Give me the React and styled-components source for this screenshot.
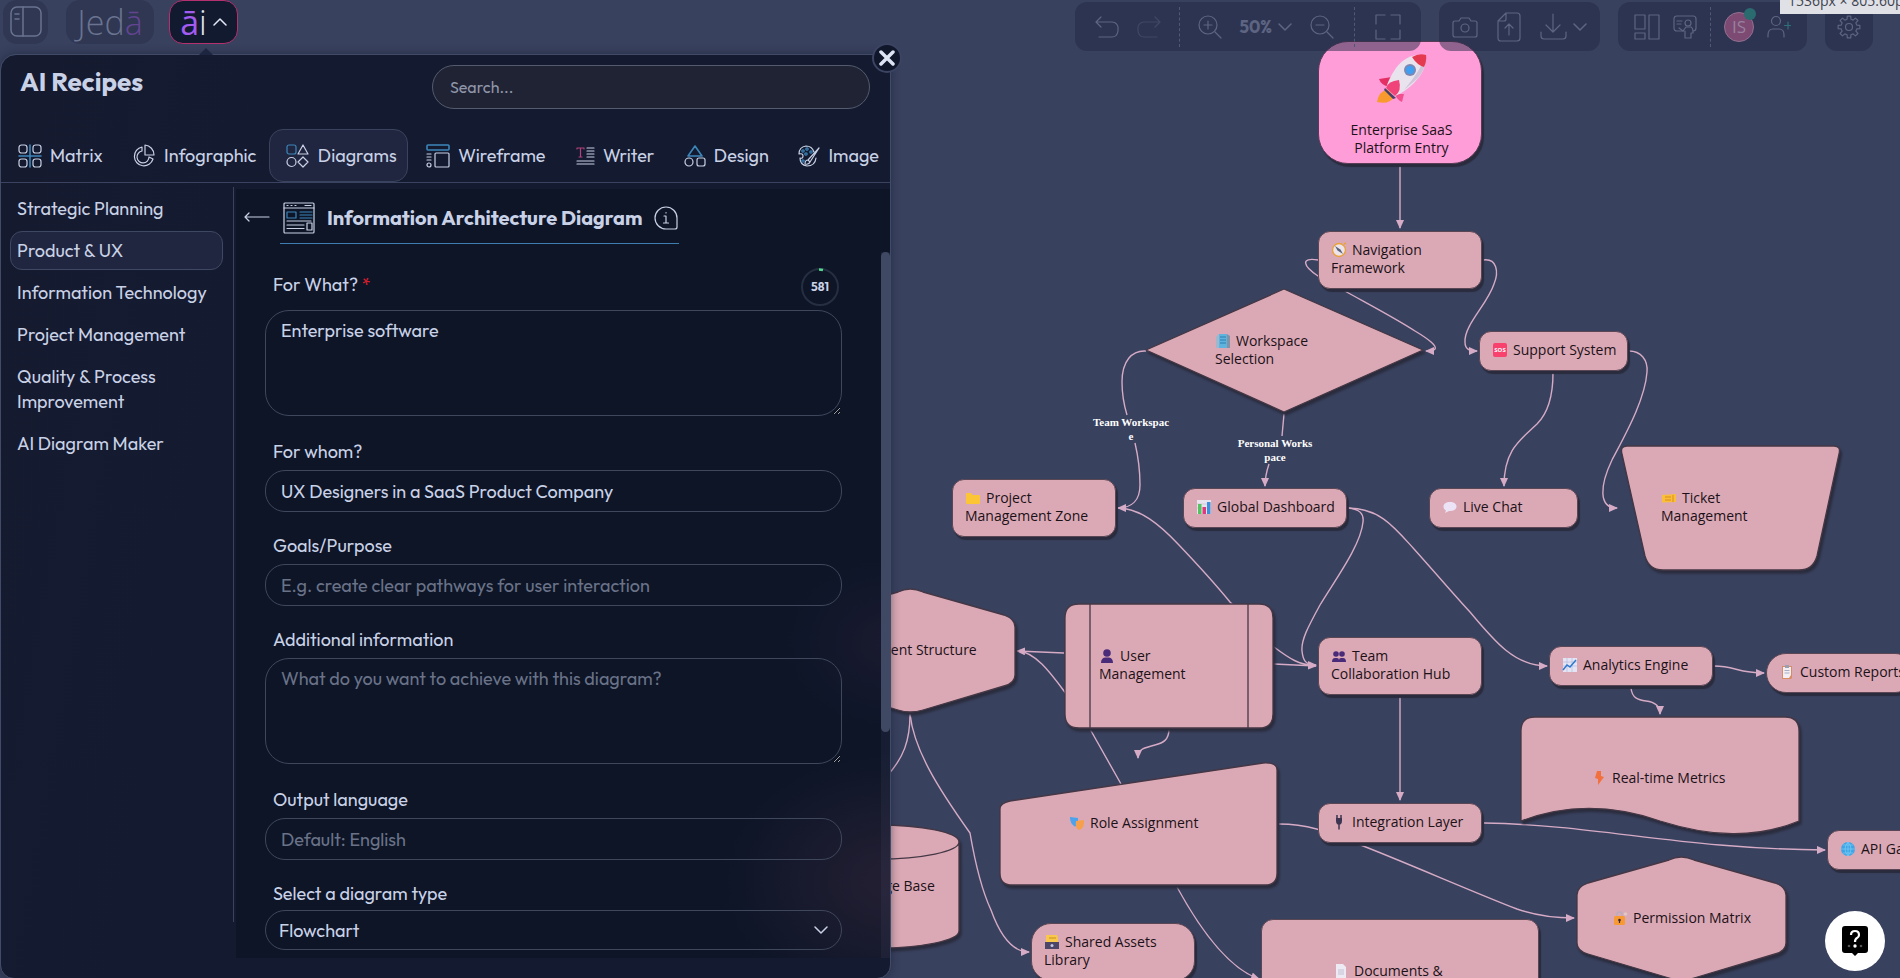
import React from "react";
import styled, { createGlobalStyle, css } from "styled-components";

const GlobalStyle = createGlobalStyle`
  *, *::before, *::after {
    box-sizing: border-box;
  }
  body {
    margin: 0;
    background: #38415e;
    color: #c9d1e6;
    font-family: Outfit, Lato, "Open Sans", sans-serif;
    font-size: 18px;
  }
  button, input, textarea, select {
    font: inherit;
    color: inherit;
  }
`;

const Page = styled.div`
  position: relative;
  min-height: 100vh;
  display: flex;
  flex-direction: column;
  overflow: hidden;
`;

/* ---------- canvas ---------- */

const Canvas = styled.main`
  position: absolute;
  inset: 0;
  overflow: hidden;
  font-family: "Open Sans", "Noto Sans", sans-serif;
  font-size: 14px;
  line-height: 18px;
  color: #1c1118;
`;
const Edges = styled.svg`
  position: absolute;
  inset: 0;
  width: 100%;
  height: 100%;
  fill: none;
  stroke: #d6abc6;
  stroke-width: 1.4;
`;
const Node = styled.div`
  position: absolute;
  left: ${(p) => p.$x}px;
  top: ${(p) => p.$y}px;
  width: ${(p) => p.$w}px;
  height: ${(p) => p.$h}px;
  padding-bottom: 2px;
  padding-left: ${(p) => p.$pad}px;
  display: flex;
  align-items: center;
  ${(p) =>
    p.$plain &&
    css`
      background: #dba9b5;
      border-radius: ${p.$radius}px;
      border: 1px solid #5b4655;
      box-shadow: 2px 3px 1px #2a2c3d;
    `}
`;
const EntryNode = styled(Node)`
  flex-direction: column;
  padding: 12px 0 0 3px;
  gap: 17px;
  text-align: center;
  background: #ff9dd9;
  border: 1px solid #5b3c57;
  border-radius: 30px;
  box-shadow: 2px 3px 1px #2a2c3d;
`;
const Outline = styled.svg`
  position: absolute;
  inset: 0;
  width: 100%;
  height: 100%;
  overflow: visible;
  fill: #dba9b5;
  stroke: #453745;
  stroke-width: 1.3;
  filter: drop-shadow(2px 3px 1px #2a2c3d);
`;
const NodeText = styled.span`
  position: relative;
  white-space: pre-line;
`;
const Emoji = styled.svg`
  width: 16px;
  height: 16px;
  margin-right: 5px;
  vertical-align: -3px;
`;
const EdgeLabel = styled.div`
  position: absolute;
  left: ${(p) => p.$x}px;
  top: ${(p) => p.$y}px;
  transform: translateX(-50%);
  white-space: pre;
  text-align: center;
  color: #fff;
  font: bold 11px/14px "Liberation Serif", serif;
`;

const emojis = {
  compass: (
    <>
      <circle cx="8" cy="8" r="6.500" fill="#ece4ea" stroke="#e8a13c" strokeWidth="1.4" />
      <path d="M4 4l5.5 3.5L12 12 6.5 8.5z" fill="#5c6079" />
      <path d="M13 2l2-1" stroke="#e8a13c" strokeWidth="1.5" />
    </>
  ),
  building: (
    <>
      <path d="M1 4l3-3v14H1z" fill="#9db8cc" />
      <path d="M4 1h8v14H4z" fill="#5eb4de" />
      <path d="M12 1l3 2v12h-3z" fill="#8293a6" />
      <path d="M6 3v9M8 3v9M10 3v9" stroke="#2f7fb0" strokeDasharray="2 1" />
    </>
  ),
  sos: (
    <>
      <rect x="1" y="1" width="14" height="14" rx="2" fill="#f8416d" />
      <text x="8" y="10" textAnchor="middle" fontSize="6" fontWeight="700" fill="#fff">SOS</text>
    </>
  ),
  folder: <path d="M1 4q0-1 1-1h4l1.500 2H14q1 0 1 1v7q0 1-1 1H2q-1 0-1-1z" fill="#fcc536" />,
  bars: (
    <>
      <rect x="1" y="1" width="14" height="14" fill="#e8e4ee" />
      <path d="M1 5h14M1 9h14" stroke="#c9b7d1" strokeWidth=".6" />
      <path d="M2 5h3.500v10H2z" fill="#56c162" />
      <path d="M6.500 8H10v7H6.500z" fill="#df3a7c" />
      <path d="M11 3h3.500v12H11z" fill="#3c8fdb" />
    </>
  ),
  chat: <path d="M8 3c4 0 6.500 2 6.500 4.500S12 12 8 12l-1 0L3 14l1-2.500C2 10.500 1.500 9 1.500 7.500 1.500 5 4 3 8 3z" fill="#ece4f6" />,
  ticket: (
    <>
      <path d="M1 5l14-1v8L1 12.500z" fill="#fbbe3a" />
      <path d="M4 7h6M4 10h6M12 5v7" stroke="#d98d1e" />
    </>
  ),
  user: (
    <>
      <circle cx="8" cy="5" r="3.800" fill="#4a2b7a" />
      <path d="M2 15q0-5 4-5.500h4q4 .5 4 5.500z" fill="#4a2b7a" />
    </>
  ),
  users: (
    <>
      <circle cx="5" cy="6" r="2.800" fill="#4a2b7a" />
      <circle cx="11" cy="6" r="2.800" fill="#4a2b7a" />
      <path d="M1 14q0-4 3-4h2q2 0 2 2 0-2 2-2h2q3 0 3 4z" fill="#4a2b7a" />
    </>
  ),
  chart: (
    <>
      <rect x="1" y="1" width="14" height="14" fill="#e3e4f4" />
      <path d="M1 5h14M1 9h14M5 1v14M10 1v14" stroke="#b6bddd" strokeWidth=".7" />
      <path d="M1 13l4-5 3 2 6-7" stroke="#2f79cf" strokeWidth="1.500" fill="none" />
    </>
  ),
  clipboard: (
    <>
      <path d="M3 2h10v12l-1 1H3z" fill="#d98c62" />
      <path d="M4 3h8v8l-2 3H4z" fill="#f1eef6" />
      <path d="M6 1h4v3H6z" fill="#9aa0b4" />
      <path d="M5.500 6.500h5M5.500 9h5" stroke="#a9adc0" />
    </>
  ),
  bolt: <path d="M6 1h4v5l3 1-6 8V9L4 8z" fill="#f2703e" />,
  masks: (
    <>
      <path d="M1 2l8 1v5c-1 3-3 4-4 3S1 8 1 2z" fill="#4aa3ec" />
      <path d="M7 6l8-1c0 6-1 9-5 10-2-1-4-3-3-9z" fill="#f6a04b" />
    </>
  ),
  plug: (
    <>
      <path d="M6 1v4M10 1v4" stroke="#3d3552" strokeWidth="1.500" />
      <path d="M5 4h6v3q0 3-1.500 3.500h-3Q5 10 5 7z" fill="#3d3552" />
      <path d="M8 10v5.500" stroke="#3d3552" strokeWidth="1.500" />
    </>
  ),
  globe: (
    <>
      <circle cx="8" cy="8" r="7" fill="#3ea6e6" />
      <path d="M1 8h14M3 4h10M3 12h10M8 1v14M8 1q-6 7 0 14M8 1q6 7 0 14" stroke="#7fcaf3" strokeWidth=".7" fill="none" />
    </>
  ),
  lock: (
    <>
      <path d="M5 7V4.500a2.500 2.500 0 015 0V7" stroke="#b9adbd" strokeWidth="1.500" fill="none" />
      <rect x="2" y="6" width="11" height="9" rx="1.500" fill="#f79a33" />
      <circle cx="7.500" cy="10" r="1.300" fill="#3d2433" />
      <path d="M7.500 10v3" stroke="#3d2433" strokeWidth="1.200" />
      <circle cx="13.500" cy="4" r="1.800" fill="#e0c7c4" />
    </>
  ),
  box: (
    <>
      <path d="M2 1h11l1 3v4H2z" fill="#f9c74c" />
      <path d="M5 4h7" stroke="#c98f24" />
      <path d="M1 8h14v7H1z" fill="#4d4668" />
      <circle cx="8" cy="11.500" r="1.500" fill="#c6c4e6" />
    </>
  ),
  page: (
    <>
      <path d="M3 1h7l3 3v11H3z" fill="#eeeaf4" />
      <path d="M5 7h6M5 9h6M5 11h6" stroke="#b7b6cb" strokeWidth=".8" />
    </>
  ),
};

const shapes = {
  diamond: "M138 0L277 61L138 123L0 61Z",
  trapezoid: "M6 0H213Q220 0 218 8L196 110Q192 124 178 124H42Q28 124 24 110L1 8Q-1 0 6 0Z",
  hexagon:
    "M92 3Q104-3 117 3L198 26Q209 30 209 38V86Q209 94 198 97L117 121Q104 125 92 121L11 97Q0 94 0 86V38Q0 30 11 26Z",
  input: "M10 39L263 1Q277 0 277 8V111Q277 123 265 123H12Q0 123 0 111V47Q0 41 10 39Z",
  document: "M14 0H264Q278 0 278 14V104C235 122 190 120 139 104C90 87 45 87 0 104V14Q0 0 14 0Z",
  subroutine: "M14 0H194Q208 0 208 14V110Q208 124 194 124H14Q0 124 0 110V14Q0 0 14 0ZM25 0V124M183 0V124",
  cylinder: "M0 17A82 17 0 01164 17V106A82 17 0 010 106ZM164 17A82 17 0 010 17",
};

const nodes = [
  { x: 1318, y: 231, w: 164, h: 58, icon: "compass", text: "Navigation\nFramework" },
  { x: 1146, y: 289, w: 277, h: 123, pad: 69, shape: "diamond", icon: "building", text: "Workspace\nSelection" },
  { x: 1479, y: 331, w: 149, h: 40, icon: "sos", text: "Support System" },
  { x: 952, y: 479, w: 164, h: 58, icon: "folder", text: "Project\nManagement Zone" },
  { x: 1183, y: 488, w: 164, h: 40, icon: "bars", text: "Global Dashboard" },
  { x: 1429, y: 488, w: 149, h: 40, icon: "chat", text: "Live Chat" },
  { x: 1621, y: 446, w: 219, h: 124, pad: 40, shape: "trapezoid", icon: "ticket", text: "Ticket\nManagement" },
  { x: 806, y: 589, w: 209, h: 123, pad: 33, shape: "hexagon", icon: "folder", text: "Content Structure" },
  { x: 1065, y: 604, w: 208, h: 124, pad: 34, shape: "subroutine", icon: "user", text: "User\nManagement" },
  { x: 1318, y: 637, w: 164, h: 58, icon: "users", text: "Team\nCollaboration Hub" },
  { x: 1549, y: 646, w: 164, h: 40, icon: "chart", text: "Analytics Engine" },
  { x: 1766, y: 653, w: 149, h: 40, radius: 20, icon: "clipboard", text: "Custom Reports" },
  { x: 1521, y: 717, w: 278, h: 123, pad: 70, shape: "document", icon: "bolt", text: "Real-time Metrics" },
  { x: 1000, y: 762, w: 277, h: 123, pad: 69, shape: "input", icon: "masks", text: "Role Assignment" },
  { x: 1318, y: 803, w: 164, h: 40, icon: "plug", text: "Integration Layer" },
  { x: 1827, y: 830, w: 149, h: 40, icon: "globe", text: "API Gateway" },
  { x: 1577, y: 857, w: 209, h: 123, pad: 35, shape: "hexagon", icon: "lock", text: "Permission Matrix" },
  { x: 795, y: 825, w: 164, h: 123, shape: "cylinder", icon: "page", text: "Knowledge Base" },
  { x: 1031, y: 923, w: 164, h: 58, radius: 20, icon: "box", text: "Shared Assets\nLibrary" },
  { x: 1261, y: 919, w: 278, h: 124, pad: 71, icon: "page", text: "Documents &\nFiles" },
];

const edges = [
  "M1400 166V228",
  "M1318 260C1300 257 1303 266 1318 276C1330 283 1335 286 1343 290C1370 305 1395 318 1415 331C1430 340 1437 346 1435 349C1434 351 1431 351 1426 351",
  "M1483 260C1497 258 1499 272 1494 284C1487 305 1464 325 1465 342C1465 349 1469 351 1477 351",
  "M1135 443C1139 460 1140 470 1140 485C1140 500 1132 508 1118 508",
  "M1269 464C1267 470 1265 476 1265 486",
  "M1348 508C1380 508 1395 528 1414 549C1440 578 1455 596 1470 612C1495 642 1515 666 1547 666",
  "M1348 508C1360 509 1364 514 1363 522C1361 545 1335 580 1320 605C1308 627 1301 640 1302 651C1303 660 1305 665 1316 665",
  "M1274 664L1316 666",
  "M1064 653L1017 651",
  "M1169 729C1169 740 1163 743 1155 745C1145 748 1138 748 1138 758",
  "M1400 696V800",
  "M910 714C914 750 938 788 970 833C976 868 984 895 991 910C1000 935 1012 952 1029 952",
  "M1279 824C1310 824 1330 833 1358 844C1400 860 1480 895 1517 909C1540 917 1560 918 1574 918",
  "M1484 823C1600 825 1680 849 1825 850",
  "M1631 688C1632 698 1638 700 1646 701C1655 702 1660 706 1660 714",
  "M1714 666C1735 666 1738 673 1764 673",
  "M1553 373C1553 395 1549 412 1537 424C1520 440 1504 450 1504 486",
  "M1629 351C1641 351 1648 360 1647 372C1645 400 1625 435 1612 460C1600 485 1598 508 1617 508",
  "M1177 887C1195 920 1225 967 1259 979",
];
const plainEdges = [
  "M1146 351C1132 350 1122 361 1122 382C1122 395 1124 405 1127 415",
  "M1284 414L1282 436",
  "M1118 508C1140 508 1160 525 1178 544C1198 565 1212 580 1230 602L1274 647C1290 659 1300 665 1312 665",
  "M1018 651C1035 652 1050 672 1064 691C1075 705 1085 720 1090 729L1121 784",
  "M910 714C910 740 904 758 886 777",
];

function Rocket() {
  return (
    <svg width="50" height="50" viewBox="0 0 50 50" aria-hidden="true">
      <path d="M11 35Q1 38 0 48Q12 51 17 43Z" fill="#f99a2e" />
      <path d="M15 23L2 25Q4 31 12 33Z" fill="#e42f64" />
      <path d="M27 40L25 48Q20 46 18 40Z" fill="#f24f8f" />
      <path d="M8 34L19 44L16 45L7 36Z" fill="#46406e" />
      <path d="M49 1Q30-1 19 14Q12 24 9 34L18 42Q28 38 37 29Q50 16 49 1Z" fill="#e9e3ee" />
      <path d="M49 1Q50 13 41 24L27 36Q44 16 49 1Z" fill="#cfc4da" />
      <path d="M49 1Q42-1 35 3Q40 11 47 13Q50 7 49 1Z" fill="#e53950" />
      <circle cx="33" cy="16" r="6" fill="#7b88b4" />
      <circle cx="33" cy="16" r="4" fill="#3f9ef0" />
      <path d="M22 26Q11 27 9 34L18 42Q25 37 22 26Z" fill="#f0437a" />
    </svg>
  );
}

function FlowNode({ x, y, w, h, pad = 12, radius = 12, shape, icon, text }) {
  return (
    <Node $x={x} $y={y} $w={w} $h={h} $pad={pad} $radius={radius} $plain={!shape}>
      {shape && (
        <Outline>
          <path d={shapes[shape]} strokeLinejoin="round" />
        </Outline>
      )}
      <NodeText>
        <Emoji viewBox="0 0 16 16" aria-hidden="true">
          {emojis[icon]}
        </Emoji>
        {text}
      </NodeText>
    </Node>
  );
}

function Flowchart() {
  return (
    <Canvas>
      <Edges aria-hidden="true">
        <defs>
          <marker id="arrow" viewBox="0 0 9 8" refX="8" refY="4" markerWidth="9" markerHeight="8" markerUnits="userSpaceOnUse" orient="auto">
            <path d="M0 0L9 4L0 8Z" fill="#d6abc6" stroke="none" />
          </marker>
        </defs>
        {plainEdges.map((d) => (
          <path key={d} d={d} />
        ))}
        {edges.map((d) => (
          <path key={d} d={d} markerEnd="url(#arrow)" />
        ))}
      </Edges>
      <EntryNode $x={1318} $y={41} $w={164} $h={123}>
        <Rocket />
        <NodeText>{"Enterprise SaaS\nPlatform Entry"}</NodeText>
      </EntryNode>
      {nodes.map((node) => (
        <FlowNode key={node.text} {...node} />
      ))}
      <EdgeLabel $x={1131} $y={415}>{"Team Workspac\ne"}</EdgeLabel>
      <EdgeLabel $x={1275} $y={436}>{"Personal Works\npace"}</EdgeLabel>
    </Canvas>
  );
}

/* ---------- top bar ---------- */

const TopBar = styled.header`
  position: relative;
  display: flex;
  justify-content: space-between;
  padding: 0 27px 0 3px;
`;
const BarSide = styled.div`
  display: flex;
  gap: ${(p) => p.$gap}px;
  padding-top: ${(p) => p.$top || 0}px;
`;
const IconButton = styled.button`
  flex: none;
  display: flex;
  align-items: center;
  justify-content: center;
  gap: 6px;
  padding: 0;
  border: 0;
  background: none;
  cursor: pointer;

  &:disabled {
    color: inherit;
    opacity: 0.4;
  }
`;
const BarButton = styled(IconButton)`
  height: 44px;
  width: ${(p) => p.$w}px;
  border-radius: 14px;
  background: rgba(34, 39, 68, 0.4);
  color: #6a7390;
`;
const AiButton = styled(BarButton)`
  margin-left: -3px;
  border: 1px solid #b5306e;
  background: #121a30;
  color: #e3e8f6;
`;
const Logo = styled.span`
  font: 300 34px/42px "Open Sans", sans-serif;
  color: ${(p) => (p.$dim ? "#6a7390" : "#e3e8f6")};

  b {
    font-weight: ${(p) => (p.$dim ? 300 : 400)};
    color: ${(p) => (p.$dim ? "#634492" : "#a35cf0")};
  }
`;
const ToolGroup = styled.div`
  display: flex;
  align-items: center;
  height: 49px;
  padding: 0 ${(p) => p.$px}px;
  gap: ${(p) => p.$gap}px;
  border-radius: 12px;
  background: rgba(34, 39, 68, 0.5);
  color: #5d6582;
`;
const Divider = styled.span`
  height: 40px;
  margin: 0 ${(p) => p.$mx || 0}px;
  border-left: 1px dashed #505873;
`;
const ZoomLevel = styled(IconButton)`
  font-size: 17px;
  font-weight: 700;
`;
const Avatar = styled.span`
  position: relative;
  width: 30px;
  height: 30px;
  border: 1px solid #93708f;
  border-radius: 50%;
  background: #7c4a73;
  color: #98809f;
  font: 17px/28px "Open Sans", sans-serif;
  text-align: center;
`;
const Presence = styled.span`
  position: absolute;
  top: -5px;
  right: -3px;
  width: 12px;
  height: 12px;
  border-radius: 50%;
  background: #2a6b70;
`;
const SizeHint = styled.div`
  position: absolute;
  top: -9px;
  left: calc(100% - 120px);
  height: 23px;
  padding: 0 8px;
  background: #dfe1e7;
  color: #40444f;
  font: 14px/20px "Open Sans", sans-serif;
  white-space: nowrap;
`;

function Icon({ size = 24, w, children, sw = 1.2 }) {
  return (
    <svg
      width={w || size}
      height={size}
      viewBox={`0 0 ${w || size} ${size}`}
      fill="none"
      stroke="currentColor"
      strokeWidth={sw}
      strokeLinecap="round"
      strokeLinejoin="round"
      aria-hidden="true"
    >
      {children}
    </svg>
  );
}

function Chevron({ up }) {
  return (
    <Icon size={14} sw={1.5}>
      <path d={up ? "M1 10l6-6 6 6" : "M1 4l6 6 6-6"} />
    </Icon>
  );
}

const gearTeeth = Array.from({ length: 8 }, (_, i) => {
  const at = (r, deg) => {
    const a = ((i * 45 + deg) * Math.PI) / 180;
    return `${12 + r * Math.cos(a)} ${12 + r * Math.sin(a)}`;
  };
  return `${i ? "L" : "M"}${at(8, -14)}L${at(11, -9)}L${at(11, 9)}L${at(8, 14)}`;
}).join("");

function Toolbar() {
  return (
    <BarSide $gap={18} $top={2}>
      <ToolGroup $px={20} $gap={18}>
        <IconButton aria-label="Undo">
          <Icon><path d="M6 2L1 7l5 5M1 7h16a6 6 0 016 7v2q-1 6-6 6H4" /></Icon>
        </IconButton>
        <IconButton aria-label="Redo" disabled>
          <Icon><path d="M18 2l5 5-5 5M23 7H7a6 6 0 00-6 7v2q1 6 6 6h13" /></Icon>
        </IconButton>
        <Divider />
        <IconButton aria-label="Zoom in">
          <Icon><circle cx="10" cy="10" r="9" /><path d="M17 17l6 6M10 6v8M6 10h8" /></Icon>
        </IconButton>
        <ZoomLevel aria-label="Zoom level">50%<Chevron /></ZoomLevel>
        <IconButton aria-label="Zoom out">
          <Icon><circle cx="10" cy="10" r="9" /><path d="M17 17l6 6M6 10h8" /></Icon>
        </IconButton>
        <Divider $mx={2} />
        <IconButton aria-label="Full screen">
          <Icon size={26}><path d="M1 10V1h9M16 1h9v9M25 16v9h-9M10 25H1v-9" /></Icon>
        </IconButton>
      </ToolGroup>
      <ToolGroup $px={13} $gap={19}>
        <IconButton aria-label="Snapshot">
          <Icon size={26}>
            <path d="M3 7h4l2-3h8l2 3h4q2 0 2 2v12q0 2-2 2H3q-2 0-2-2V9q0-2 2-2z" />
            <circle cx="13" cy="14" r="4" />
          </Icon>
        </IconButton>
        <IconButton aria-label="Import">
          <Icon size={30} w={24}>
            <path d="M9 1h11q3 0 3 3v22q0 3-3 3H4q-3 0-3-3V9zM9 1v6q0 2-2 2H1M12 23V12M8 16l4-4 4 4" />
          </Icon>
        </IconButton>
        <IconButton aria-label="Export">
          <Icon size={27}><path d="M13 1v17M6 12l7 7 7-7M1 19v4q0 3 3 3h19q3 0 3-3v-4" /></Icon>
          <Chevron />
        </IconButton>
      </ToolGroup>
      <ToolGroup $px={16} $gap={13}>
        <IconButton aria-label="Templates">
          <Icon size={26}><path d="M1 1h10v14H1zM1 19h10v6H1zM15 1h10v24H15z" /></Icon>
        </IconButton>
        <IconButton aria-label="Present">
          <Icon size={24}>
            <path d="M11 16H4q-3 0-3-3V4q0-3 3-3h16q3 0 3 3v9q0 3-3 3M4 6h5M4 9h4" />
            <circle cx="15" cy="8" r="3" />
            <path d="M6 13l4 3 3-4h5q2 1 2 4v2h-2v5h-6v-7" />
          </Icon>
        </IconButton>
        <Divider />
        <Avatar>IS<Presence /></Avatar>
        <IconButton aria-label="Invite">
          <Icon size={24}>
            <circle cx="9" cy="6" r="4.500" />
            <path d="M1 22v-2q0-6 5-6h6q5 0 5 6v2" />
            <path d="M21 7v7M17.500 10.500h6" stroke="#2f7078" />
          </Icon>
        </IconButton>
      </ToolGroup>
      <ToolGroup $px={12}>
        <IconButton aria-label="Settings">
          <Icon><path d={`${gearTeeth}Z`} /><circle cx="12" cy="12" r="3.500" /></Icon>
        </IconButton>
      </ToolGroup>
    </BarSide>
  );
}

/* ---------- recipes panel ---------- */

const Panel = styled.section`
  position: relative;
  flex: 1;
  display: flex;
  flex-direction: column;
  width: 100%;
  max-width: 891px;
  margin-top: 3px;
  border: 1px solid #414a66;
  border-radius: 16px 0 14px 14px;
  background: linear-gradient(100deg, #151a2f, #141b30 30%);
  box-shadow: 0 0 8px rgba(20, 27, 48, 0.5);
`;
const Caret = styled.span`
  position: absolute;
  top: -7px;
  left: 198px;
  border: 7px solid transparent;
  border-top: 0;
  border-bottom-color: #1d2540;
`;
const CloseButton = styled(IconButton)`
  position: absolute;
  top: -12px;
  right: -12px;
  width: 30px;
  height: 30px;
  border: 2px solid #3b4462;
  border-radius: 50%;
  background: #10172b;
  color: #dde4f4;
`;
const PanelHead = styled.div`
  display: flex;
  justify-content: space-between;
  padding: 10px 20px 20px 19px;
`;
const Title = styled.h1`
  margin: 0;
  font-size: 26px;
  line-height: 34px;
  font-weight: 700;
`;
const Search = styled.input`
  width: 52%;
  max-width: 438px;
  height: 44px;
  padding: 0 17px;
  border: 1px solid #555b6e;
  border-radius: 22px;
  background: #202334;
  font-size: 16px;
  outline: none;

  &::placeholder {
    color: #9096a9;
  }
`;
const Tabs = styled.nav`
  display: flex;
  justify-content: space-between;
  border-bottom: 1px solid #3a4460;
`;
const Tab = styled.button`
  display: flex;
  align-items: center;
  gap: 8px;
  height: 53px;
  padding: 0 10px 0 16px;
  border: 1px solid ${(p) => (p.$active ? "#3a435d" : "transparent")};
  border-radius: 14px;
  background: ${(p) => (p.$active ? "#20263f" : "none")};
  cursor: pointer;
`;
const PanelBody = styled.div`
  display: flex;
  align-items: flex-start;
`;
const Categories = styled.ul`
  flex: none;
  display: flex;
  flex-direction: column;
  gap: 3px;
  align-self: stretch;
  width: 233px;
  margin: 4px 0 56px;
  padding: 2px 10px 0 9px;
  list-style: none;
  border-right: 1px solid #3a435d;
`;
const Category = styled.button`
  display: block;
  width: 100%;
  padding: 6px;
  line-height: 25px;
  text-align: left;
  border: 1px solid ${(p) => (p.$active ? "#3f4862" : "transparent")};
  border-radius: 12px;
  background: ${(p) => (p.$active ? "#20263f" : "none")};
  cursor: pointer;
`;
const FormPane = styled.div`
  flex: 1;
  margin: 6px 0 20px 2px;
  background:
    radial-gradient(ellipse 170px 130px at 100% 90%, #241f33, rgba(30, 27, 50, 0)),
    radial-gradient(ellipse 110px 90px at 100% 59%, #1a1a2f, rgba(20, 22, 42, 0)),
    #0d1527;
`;
const FormHead = styled.div`
  display: flex;
  align-items: flex-start;
  gap: 10px;
  height: 63px;
  padding: 12px 8px 0;
`;
const BackButton = styled(IconButton)`
  height: 32px;
`;
const FormTitle = styled.div`
  display: flex;
  align-items: center;
  gap: 12px;
  padding: 0 1px 8px 3px;
  border-bottom: 1px solid #3f7db0;
`;
const Heading = styled.h2`
  margin: 0;
  font-size: 20px;
  line-height: 34px;
  font-weight: 700;
`;
const Scroller = styled.div`
  display: flex;
`;
const Form = styled.form`
  flex: 1;
  display: flex;
  flex-direction: column;
  gap: 21px;
  padding: 16px 39px 8px 29px;
`;
const Scrollbar = styled.div`
  width: 9px;
  background: rgba(64, 72, 99, 0.2);
`;
const Thumb = styled.div`
  height: 68%;
  border-radius: 5px;
  background: #404963;
`;
const Field = styled.div`
  display: flex;
  flex-direction: column;
  gap: ${(p) => p.$gap || 6}px;
`;
const Label = styled.label`
  padding-left: 8px;
  line-height: 25px;

  i {
    color: #d81e2c;
    font-style: normal;
  }
`;
const LabelRow = styled.div`
  display: flex;
  justify-content: space-between;
  align-items: flex-start;
  padding-right: 2px;

  ${Label} {
    padding-top: 4px;
  }
`;
const Counter = styled.span`
  position: relative;
  width: 40px;
  height: 38px;
  font-size: 12px;
  line-height: 38px;
  font-weight: 700;
  text-align: center;

  svg {
    position: absolute;
    inset: 0;
  }
`;
const control = css`
  display: block;
  width: 100%;
  padding: 0 15px;
  border: 1px solid #3f475d;
  background: none;
  outline: none;

  &::placeholder {
    color: #6a7288;
  }
`;
const Input = styled.input`
  ${control}
  height: 42px;
  border-radius: 20px;
`;
const TextArea = styled.textarea`
  ${control}
  height: 106px;
  margin-bottom: 2px;
  padding: 7px 15px;
  line-height: 25px;
  border-radius: 24px;
  resize: vertical;
`;
const SelectBox = styled.div`
  display: grid;
  align-items: center;

  select {
    ${control}
    grid-area: 1 / 1;
    height: 40px;
    padding: 0 13px;
    border-radius: 20px;
    appearance: none;
  }
  option {
    background: #0d1527;
  }
  svg {
    grid-area: 1 / 1;
    justify-self: end;
    margin-right: 14px;
    pointer-events: none;
  }
`;
const HelpButton = styled(IconButton)`
  position: fixed;
  right: 15px;
  bottom: 7px;
  width: 60px;
  height: 60px;
  border-radius: 50%;
  background: #fff;
`;

const blue = "#3c86ba";

const tabs = [
  ["Matrix", <Icon key="i"><path d="M12 1v22M1 12h22" stroke={blue} strokeWidth="1.600" /><rect x="1" y="1" width="8" height="8" rx="2.500" /><rect x="15" y="1" width="8" height="8" rx="2.500" /><rect x="1" y="15" width="8" height="8" rx="2.500" /><rect x="15" y="15" width="8" height="8" rx="2.500" /></Icon>],
  ["Infographic", <Icon key="i"><path d="M10 3a9.500 9.500 0 1011 12l-4-2a6 6 0 11-7-6z" /><path d="M13 1a10 10 0 019 10h-9z" /></Icon>],
  ["Diagrams", <Icon key="i"><rect x="1" y="1" width="9" height="9" rx="2" stroke={blue} /><path d="M17 1l5 9H12z" /><circle cx="5.500" cy="18" r="4.500" /><path d="M17 13l5 5-5 5-5-5z" /></Icon>],
  ["Wireframe", <Icon key="i"><rect x="1" y="1" width="22" height="5" rx="1" stroke={blue} strokeWidth="1.600" /><rect x="9" y="9" width="14" height="14" rx="1" /><path d="M1 10h4M1 13h4M1 16h4" /><circle cx="3" cy="21" r="2" /></Icon>],
  ["Writer", <Icon key="i" size={20}><path d="M2 3V2h7v1M5.500 2v9M4 11h3" stroke="#b2417c" /><path d="M12 2h7M12 5h7M12 8h7M12 11h7M2 15h17M2 18h17" /></Icon>],
  ["Design", <Icon key="i" size={22}><path d="M11 1l7 10H4z" stroke={blue} strokeWidth="1.600" /><circle cx="5" cy="17" r="4" /><rect x="13" y="13" width="8" height="8" rx="2" /></Icon>],
  ["Image", <Icon key="i" size={22}><path d="M16 7Q14 1 8 1 1 2 1 9q4-1 4 2t-3 2q0 7 7 8 8 0 9-8" /><path d="M21 3L10 15l2 2L21 3M10 15q-3 0-3 4 4 1 5-2" /><g stroke={blue}><circle cx="5" cy="6" r="1.200" /><circle cx="9" cy="4" r="1.200" /><circle cx="13" cy="7" r="1.200" /><circle cx="5" cy="16" r="1.200" /><circle cx="8" cy="9" r="1.200" /></g></Icon>],
];

const categories = [
  "Strategic Planning",
  "Product & UX",
  "Information Technology",
  "Project Management",
  "Quality & Process Improvement",
  "AI Diagram Maker",
];

function RecipeForm() {
  return (
    <FormPane>
      <FormHead>
        <BackButton aria-label="Back">
          <Icon size={24} w={26}><path d="M1 12h24M5 8l-4 4 4 4" /></Icon>
        </BackButton>
        <FormTitle>
          <Icon size={32}>
            <rect x="1" y="1" width="30" height="30" rx="1" />
            <path d="M1 6h30M4 3.500h1M8 3.500h1M12 3.500h1M22 3.500h6M4 19h24M4 23h17M4 26.500h17M24 21h5v7h-5z" />
            <path d="M4 10h9v6H4zM17 10h12M17 13h12M17 16h12" stroke={blue} />
          </Icon>
          <Heading>Information Architecture Diagram</Heading>
          <Icon size={24}>
            <path d="M12 1a11 11 0 1 0 0 22h9q2 0 2-2v-9a11 11 0 0 0-11-11z" />
            <path d="M10 10h2v7M9.500 17h5M12 6.500v.5" />
          </Icon>
        </FormTitle>
      </FormHead>
      <Scroller>
        <Form onSubmit={(e) => e.preventDefault()}>
          <Field $gap={4}>
            <LabelRow>
              <Label htmlFor="what">For What? <i>*</i></Label>
              <Counter>
                <svg width="40" height="38" viewBox="0 0 40 38" fill="none" strokeWidth="2">
                  <circle cx="20" cy="19" r="18" stroke="#262e42" />
                  <path d="M19 1.500a18 18 0 014 .5" stroke="#52d88f" strokeWidth="2.500" />
                </svg>
                581
              </Counter>
            </LabelRow>
            <TextArea id="what" defaultValue="Enterprise software" />
          </Field>
          <Field>
            <Label htmlFor="whom">For whom?</Label>
            <Input id="whom" defaultValue="UX Designers in a SaaS Product Company" />
          </Field>
          <Field>
            <Label htmlFor="goals">Goals/Purpose</Label>
            <Input id="goals" placeholder="E.g. create clear pathways for user interaction" />
          </Field>
          <Field>
            <Label htmlFor="extra">Additional information</Label>
            <TextArea id="extra" placeholder="What do you want to achieve with this diagram?" />
          </Field>
          <Field>
            <Label htmlFor="lang">Output language</Label>
            <Input id="lang" placeholder="Default: English" />
          </Field>
          <Field $gap={4}>
            <Label htmlFor="type">Select a diagram type</Label>
            <SelectBox>
              <select id="type" defaultValue="Flowchart">
                <option>Flowchart</option>
              </select>
              <Chevron />
            </SelectBox>
          </Field>
        </Form>
        <Scrollbar>
          <Thumb />
        </Scrollbar>
      </Scroller>
    </FormPane>
  );
}

function RecipesPanel() {
  return (
    <Panel>
      <Caret />
      <PanelHead>
        <Title>AI Recipes</Title>
        <Search type="search" aria-label="Search recipes" placeholder="Search..." />
      </PanelHead>
      <Tabs>
        {tabs.map(([name, icon]) => (
          <Tab key={name} $active={name === "Diagrams"}>
            {icon}
            {name}
          </Tab>
        ))}
      </Tabs>
      <PanelBody>
        <Categories>
          {categories.map((name) => (
            <li key={name}>
              <Category $active={name === "Product & UX"}>{name}</Category>
            </li>
          ))}
        </Categories>
        <RecipeForm />
      </PanelBody>
      <CloseButton aria-label="Close">
        <Icon size={16} sw={3.5}><path d="M2 2l12 12M14 2L2 14" /></Icon>
      </CloseButton>
    </Panel>
  );
}

export default function App() {
  return (
    <Page>
      <GlobalStyle />
      <Flowchart />
      <TopBar>
        <BarSide $gap={18}>
          <BarButton $w={45} aria-label="Toggle sidebar">
            <Icon size={32} sw={1.5}>
              <rect x="1" y="1" width="30" height="29" rx="6" />
              <path d="M13 1v29M5 8h4M5 13h4" />
            </Icon>
          </BarButton>
          <BarButton $w={88} aria-label="Home">
            <Logo $dim>Jed<b>ā</b></Logo>
          </BarButton>
          <AiButton $w={69} aria-label="AI menu">
            <Logo><b>ā</b>i</Logo>
            <Chevron up />
          </AiButton>
        </BarSide>
        <Toolbar />
        <SizeHint>1536px × 805.60px</SizeHint>
      </TopBar>
      <RecipesPanel />
      <HelpButton aria-label="Help">
        <svg width="28" height="32" viewBox="0 0 28 32" aria-hidden="true">
          <path d="M4 1h20q3 0 3 3v21q0 3-3 3h-7l-3 3-3-3H4q-3 0-3-3V4q0-3 3-3z" fill="#000" />
          <path d="M10 10q0-4 4-4t4 4q0 2-2 3t-2 4" stroke="#fff" strokeWidth="2.200" fill="none" />
          <circle cx="14" cy="21" r="1.700" fill="#fff" />
          <circle cx="8" cy="21" r="1.300" fill="#555" />
          <circle cx="20" cy="21" r="1.300" fill="#555" />
        </svg>
      </HelpButton>
    </Page>
  );
}
